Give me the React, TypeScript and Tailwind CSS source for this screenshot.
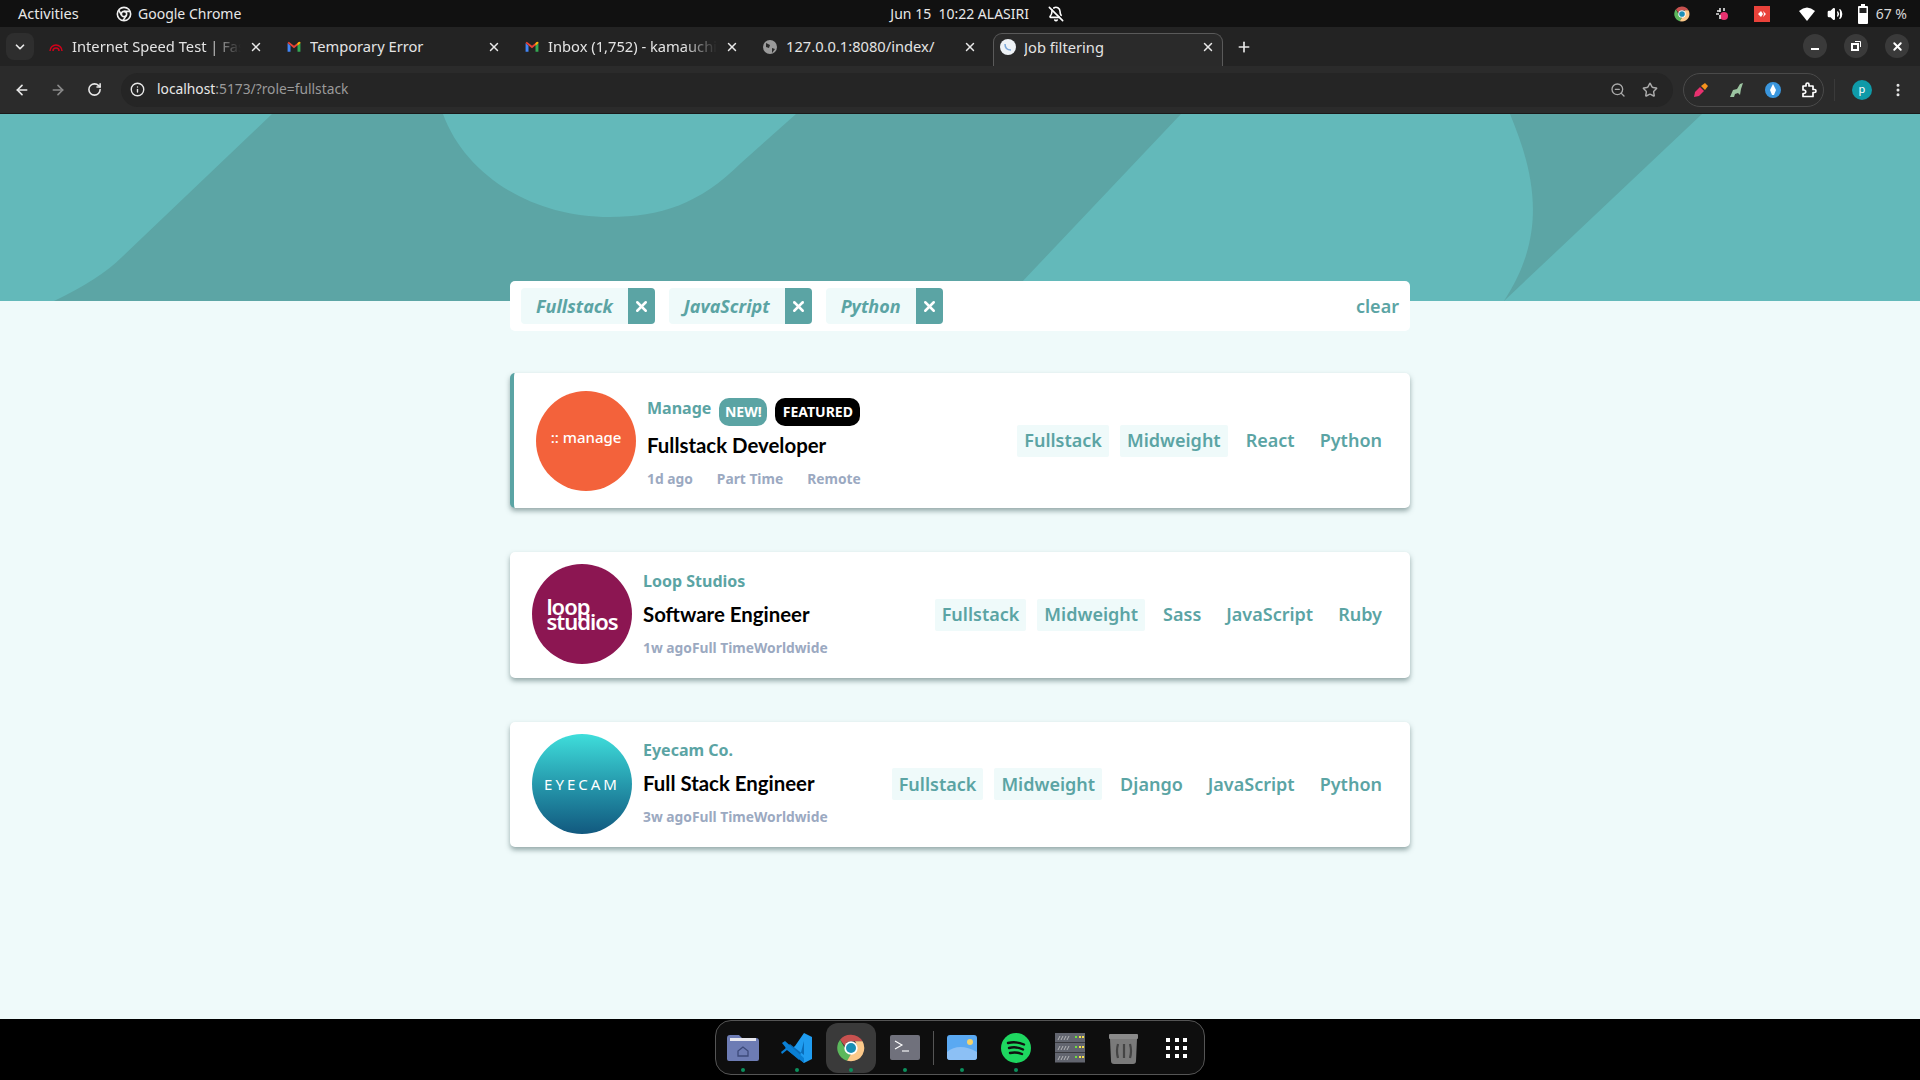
import { ChevronDown, X, Plus, ArrowLeft, ArrowRight, RotateCw, Info, ZoomOut, Star, Volume2, MoreVertical, BellOff } from 'lucide-react';

const teal = 'text-[#5ba4a4]';
const ubuntu = 'font-["Noto_Sans",sans-serif]';

function ChromeLogo({ size = 18 }: { size?: number }) {
  return (
    <svg width={size} height={size} viewBox="0 0 48 48">
      <path d="M24 4a20 20 0 0 1 17.3 10H24a10 10 0 0 0-9.4 6.6L7.6 11.6A20 20 0 0 1 24 4z" fill="#c7514f" />
      <path d="M7.6 11.6l8.6 14.9A10 10 0 0 0 24 34l-6 9.2A20 20 0 0 1 7.6 11.6z" fill="#5cb85c" />
      <path d="M41.3 14A20 20 0 0 1 24 44l-6-.8L26.6 29A10 10 0 0 0 30 14z" fill="#fcc98a" />
      <circle cx="24" cy="24" r="10" fill="#fff" />
      <circle cx="24" cy="24" r="7.5" fill="#1a8fb5" />
    </svg>
  );
}

function GmailIcon() {
  return (
    <svg width="14" height="14" viewBox="0 0 24 24">
      <path d="M1 5v15h5V10z" fill="#4285f4" />
      <path d="M23 5v15h-5V10z" fill="#34a853" />
      <path d="M1 5l11 9 11-9-2-2-9 7-9-7z" fill="#ea4335" />
      <path d="M18 10l5-5v-1l-2-1-3 2z" fill="#fbbc04" />
    </svg>
  );
}

function Tab({ icon, title, active, fade, className }: { icon: React.ReactNode; title: string; active?: boolean; fade?: boolean; className: string }) {
  return (
    <div
      className={`flex h-[33px] items-center pb-[6px] ${className} ${active ? 'rounded-t-[9px] border border-b-0 border-[#5a5a5a] bg-[#2a2a2a]' : ''}`}
    >
      <span className="flex w-[16px] shrink-0 items-center justify-center">{icon}</span>
      <span
        className={`ml-[8px] flex-1 overflow-hidden whitespace-nowrap text-[14.7px] text-[#e4e4e4] ${
          fade ? '[mask-image:linear-gradient(to_right,#000_80%,transparent)]' : ''
        }`}
      >
        {title}
      </span>
      <X size={14} strokeWidth={2.5} className="ml-2 shrink-0 text-[#e8e8e8]" />
    </div>
  );
}

function TopBar() {
  return (
    <div className="flex h-[27px] items-center bg-[#111111] text-[14px] text-[#e8e8e8]">
      <span className="ml-[18px] w-[98px] text-[14.6px]">Activities</span>
      <svg width="16" height="16" viewBox="0 0 24 24" fill="none" stroke="#f0f0f0" strokeWidth="2.4">
        <circle cx="12" cy="12" r="10" />
        <circle cx="12" cy="12" r="4" />
        <path d="M12 8h9M8.5 14L4 6M15.5 14l-5 8" />
      </svg>
      <span className="ml-[6px]">Google Chrome</span>
      <span className="ml-[649px] w-[140px] whitespace-nowrap">Jun 15&nbsp; 10:22 ALASIRI</span>
      <BellOff size={16} strokeWidth={2.4} className="ml-[18px] text-white" />
      <div className="ml-auto flex items-center">
        <ChromeLogo size={18} />
        <svg width="16" height="16" viewBox="0 0 16 16" className="ml-[23px]">
          <circle cx="10" cy="10" r="4" fill="#e8316f" />
          <path d="M6 2v4M3 5h3M2 8h3M6 9v4M10 2v3" stroke="#e8e8e8" strokeWidth="1.6" />
        </svg>
        <svg width="16" height="16" viewBox="0 0 16 16" className="ml-[24px]">
          <rect width="16" height="16" fill="#e9423a" />
          <path d="M4 8l3-3 2 3-2 3zM9 5l3 3-3 3 1-3z" fill="#fff" />
        </svg>
        <svg width="16" height="14" viewBox="0 0 16 14" className="ml-[29px]">
          <path d="M0 4q8-7 16 0L8 14z" fill="#fff" />
        </svg>
        <Volume2 size={16} className="ml-[12px] fill-white text-white" />
        <svg width="10" height="20" viewBox="0 0 10 20" className="ml-[15px]">
          <rect x="3" y="0" width="4" height="2" fill="#fff" />
          <rect x="0" y="2" width="10" height="18" rx="1" fill="#fff" />
          <rect x="1.5" y="4" width="7" height="5" fill="#222" />
        </svg>
        <span className="ml-[8px] mr-[13px] text-[#d8d8d8]">67 %</span>
      </div>
    </div>
  );
}

function TabStrip() {
  return (
    <div className="flex h-[39px] items-end bg-[#232323]">
      <div className="mb-[6px] ml-[6px] mr-[3px] flex h-[27px] w-[28px] items-center justify-center rounded-[8px] bg-[#2e2e2e]">
        <ChevronDown size={14} strokeWidth={3} className="text-[#e8e8e8]" />
      </div>
      <Tab
        className="w-[238px] pl-[11px] pr-[12px]"
        title="Internet Speed Test | Fas"
        fade
        icon={
          <svg width="14" height="14" viewBox="0 0 14 14" fill="none" stroke="#d0021b" strokeWidth="1.5">
            <path d="M1 11a6 6 0 0 1 12 0M4 11a3 3 0 0 1 6 0" />
          </svg>
        }
      />
      <Tab className="w-[238px] pl-[11px] pr-[12px]" title="Temporary Error" icon={<GmailIcon />} />
      <Tab className="w-[238px] pl-[11px] pr-[12px]" title="Inbox (1,752) - kamauchi" fade icon={<GmailIcon />} />
      <Tab
        className="w-[242px] pl-[11px] pr-[16px]"
        title="127.0.0.1:8080/index/"
        icon={
          <svg width="14" height="14" viewBox="0 0 14 14">
            <circle cx="7" cy="7" r="7" fill="#9a9a9a" />
            <path d="M3 3l4 2-1 3-3-1zM9 8l3 1-3 4z" fill="#2a2a2a" />
          </svg>
        }
      />
      <Tab
        active
        className="w-[230px] pl-[6px] pr-[7px]"
        title="Job filtering"
        icon={
          <svg width="16" height="16" viewBox="0 0 16 16">
            <circle cx="8" cy="8" r="8" fill="#eef2f6" />
            <path d="M5 5q0 6 6 6" fill="none" stroke="#7aa7d8" strokeWidth="1.5" />
          </svg>
        }
      />
      <Plus size={16} strokeWidth={2.5} className="mb-[11px] ml-[13px] text-[#e8e8e8]" />
      <div className="mb-[8px] ml-auto mr-[11px] flex gap-[17px]">
        <span className="flex h-[24px] w-[24px] items-center justify-center rounded-full bg-[#3a3a3a]">
          <span className="mt-[6px] h-[2px] w-[8px] bg-white" />
        </span>
        <span className="flex h-[24px] w-[24px] items-center justify-center rounded-full bg-[#3a3a3a]">
          <svg width="12" height="12" viewBox="0 0 12 12" fill="none" stroke="#fff">
            <rect x="2" y="4" width="6" height="6" strokeWidth="2" />
            <path d="M5 1.5h5.5V7" strokeWidth="1" />
          </svg>
        </span>
        <span className="flex h-[24px] w-[24px] items-center justify-center rounded-full bg-[#3a3a3a]">
          <X size={13} strokeWidth={3.5} className="text-white" />
        </span>
      </div>
    </div>
  );
}

function Toolbar() {
  return (
    <div className="flex h-[48px] items-center border-b border-[#1a1a1a] bg-[#2b2b2b]">
      <ArrowLeft size={16} strokeWidth={2.5} className="ml-[14px] text-[#e8e8e8]" />
      <ArrowRight size={16} strokeWidth={2.5} className="ml-[20px] text-[#8a8a8a]" />
      <RotateCw size={15} strokeWidth={2.5} className="ml-[21px] text-[#e8e8e8]" />
      <div className="ml-[19px] flex h-[34px] w-[1552px] items-center rounded-full bg-[#252525]">
        <Info size={15} strokeWidth={2.2} className="ml-[9px] text-[#e8e8e8]" />
        <span className="ml-[12px] text-[13.8px] text-[#e8e8e8]">
          localhost<span className="text-[#9a9a9a]">:5173/?role=fullstack</span>
        </span>
        <ZoomOut size={16} className="ml-auto text-[#aaaaaa]" />
        <Star size={16} strokeWidth={2.2} className="ml-[16px] mr-[15px] text-[#aaaaaa]" />
      </div>
      <div className="ml-[10px] flex h-[34px] w-[141px] items-center gap-[20px] rounded-full border border-[#4a4a4a] pl-[9px]">
        <svg width="16" height="16" viewBox="0 0 16 16">
          <path d="M1 15l1-5 5-5 4 4-5 5z" fill="#e8316f" />
          <path d="M8 4l4-3 3 3-3 4z" fill="#f7931e" />
        </svg>
        <svg width="16" height="16" viewBox="0 0 16 16">
          <path d="M1 15l3-7 4-1 3-5 3-1-2 6-1 6-2-2-3 1-1 3z" fill="#9cc5a1" />
        </svg>
        <svg width="16" height="16" viewBox="0 0 16 16">
          <circle cx="8" cy="8" r="8" fill="#3a96dd" />
          <path d="M8 2l3 6-2 5H7L5 8z" fill="#fff" />
        </svg>
        <svg width="16" height="16" viewBox="0 0 16 16" fill="none" stroke="#fff" strokeWidth="1.7" strokeLinejoin="round">
          <path d="M2 4h3V2.5a1.5 1.5 0 0 1 3 0V4h4v3.5h1.5a1.5 1.5 0 0 1 0 3H12V14.500H2v-3h1a1.700 1.700 0 0 0 0-3.500H2z" />
        </svg>
      </div>
      <span className="ml-[10px] h-[22px] w-px bg-[#3a3a3a]" />
      <span className="ml-[17px] flex h-[20px] w-[20px] items-center justify-center rounded-full bg-[#0f9aa8] text-[11px] text-white">
        p
      </span>
      <MoreVertical size={16} strokeWidth={2.5} className="ml-[18px] text-[#e8e8e8]" />
    </div>
  );
}

function HeaderArt() {
  return (
    <svg className="block h-[187px] w-full" viewBox="0 0 1920 187" preserveAspectRatio="none">
      <rect width="1920" height="187" fill="#63b9ba" />
      <path
        d="M272 0 L122 143 Q100 165 54 187 H1004 L1181 0 H796 L741 49 C700 90 660 103 610 103 C530 103 465 60 443 0 Z"
        fill="#5ca5a5"
      />
      <path d="M1510 0 C1535 60 1548 120 1504 187 L1702 0 Z" fill="#5ca5a5" />
    </svg>
  );
}

function FilterChip({ label }: { label: string }) {
  return (
    <div className="flex h-[36px] items-stretch overflow-hidden rounded-[4px] bg-[#effafa]">
      <span className={`flex items-center px-[15px] text-[18px] font-bold italic ${teal}`}>{label}</span>
      <span className="flex w-[27px] items-center justify-center bg-[#5ba4a4]">
        <X size={17} strokeWidth={3.5} className="text-white" />
      </span>
    </div>
  );
}

function Tag({ label, active }: { label: string; active?: boolean }) {
  return (
    <span className={`flex h-[32px] items-center rounded-[2px] px-[7px] text-[18px] font-semibold ${teal} ${active ? 'bg-[#effafa]' : ''}`}>
      {label}
    </span>
  );
}

type Job = {
  company: string;
  title: string;
  meta: string[];
  tags: string[];
  logo: React.ReactNode;
  featured?: boolean;
};

const jobs: Job[] = [
  {
    company: 'Manage',
    title: 'Fullstack Developer',
    meta: ['1d ago', 'Part Time', 'Remote'],
    tags: ['Fullstack', 'Midweight', 'React', 'Python'],
    featured: true,
    logo: (
      <div className="flex h-[100px] w-[100px] items-center justify-center rounded-full bg-[#f3623b] pb-[6px] text-[15px] font-medium text-white">
        :: manage
      </div>
    ),
  },
  {
    company: 'Loop Studios',
    title: 'Software Engineer',
    meta: ['1w ago', 'Full Time', 'Worldwide'],
    tags: ['Fullstack', 'Midweight', 'Sass', 'JavaScript', 'Ruby'],
    logo: (
      <div className="-mt-[1px] flex h-[100px] w-[100px] items-center justify-center rounded-full bg-[#8c1652] text-[22px] font-semibold leading-[15px] tracking-[-1px] text-white">
        <span>
          loop
          <br />
          studios
        </span>
      </div>
    ),
  },
  {
    company: 'Eyecam Co.',
    title: 'Full Stack Engineer',
    meta: ['3w ago', 'Full Time', 'Worldwide'],
    tags: ['Fullstack', 'Midweight', 'Django', 'JavaScript', 'Python'],
    logo: (
      <div className="-mt-[1px] flex h-[100px] w-[100px] items-center justify-center rounded-full bg-gradient-to-b from-[#3fdedb] to-[#12597f] text-[15px] tracking-[3px] text-white">
        EYECAM
      </div>
    ),
  },
];

function JobCard({ job }: { job: Job }) {
  const featured = job.featured;
  return (
    <div
      className={`flex items-center rounded-[5px] bg-white shadow-[0_3px_5px_rgba(60,90,90,0.5)] ${
        featured ? 'h-[135px] border-l-4 border-[#5ba4a4] pl-[22px] pr-[21px]' : 'h-[125.500px] pl-[22px] pr-[21px]'
      }`}
    >
      {job.logo}
      <div className={`ml-[11px] flex flex-col ${featured ? 'pt-[6px]' : ''}`}>
        <div className={`flex items-center ${featured ? 'h-[28px]' : 'h-[20px]'}`}>
          <span className={`text-[16px] font-bold ${teal} ${featured ? '-mt-[8px]' : '-mt-[2px]'}`}>{job.company}</span>
          {featured && (
            <>
              <span className="-mt-[1px] ml-[8px] flex h-[28px] w-[48px] items-center justify-center rounded-[10px] bg-[#5ba4a4] text-[14px] font-bold text-white">
                NEW!
              </span>
              <span className="-mt-[1px] ml-[8px] flex h-[28px] w-[85px] items-center justify-center rounded-[10px] bg-black text-[14px] font-bold text-white">
                FEATURED
              </span>
            </>
          )}
        </div>
        <div className={`font-["Lato",sans-serif] text-[20.4px] font-bold leading-[24px] text-black ${featured ? 'mt-[7px]' : 'mt-[10px]'}`}>
          {job.title}
        </div>
        <div className={`flex text-[13.800px] font-bold leading-[20px] text-[#9ba9c1] ${featured ? 'mt-[12px] gap-[24px]' : 'mt-[12px]'}`}>
          {job.meta.map((m) => (
            <span key={m}>{m}</span>
          ))}
        </div>
      </div>
      <div className="ml-auto flex gap-[11px]">
        {job.tags.map((t, i) => (
          <Tag key={t} label={t} active={i < 2} />
        ))}
      </div>
    </div>
  );
}

function DockItem({ children, dot, active }: { children: React.ReactNode; dot?: boolean; active?: boolean }) {
  return (
    <div className={`relative mx-[2px] flex h-[50px] w-[50px] items-center justify-center rounded-[12px] ${active ? 'bg-[#3a3a3a]' : ''}`}>
      {children}
      {dot && <span className="absolute bottom-[1px] left-[23px] h-[4px] w-[4px] rounded-full bg-[#0b8f5c]" />}
    </div>
  );
}

function Dock() {
  return (
    <div className="flex h-[61px] items-start justify-center bg-black pt-[1px]">
      <div className="flex h-[55px] w-[490px] items-center rounded-[16px] border border-[#555555] bg-[#0e0e0e]">
        <DockItem dot>
          <svg width="34" height="28" viewBox="0 0 34 28">
            <path d="M1 4q0-3 3-3h9l3 3h14q3 0 3 3v18q0 2-2 2H3q-2 0-2-2z" fill="#6d7cb4" />
            <rect x="4" y="4" width="26" height="3" fill="#e8e8ef" />
            <path d="M17 13l-5 4v5h10v-5z" fill="none" stroke="#3d4a7a" strokeWidth="1.3" />
          </svg>
        </DockItem>
        <DockItem dot>
          <svg width="32" height="32" viewBox="0 0 32 32">
            <path d="M23 1l8 4v22l-8 4-14-13 5-4z" fill="#1f9cf0" />
            <path d="M23 9v14l-14-11-5 4 14 12z" fill="#0a6cb8" />
            <path d="M1 11l3-2 19 17v5l-8-6-9-7-5 4-1-2 5-4z" fill="#0a7fd4" />
          </svg>
        </DockItem>
        <DockItem dot active>
          <ChromeLogo size={32} />
        </DockItem>
        <DockItem dot>
          <svg width="30" height="26" viewBox="0 0 30 26">
            <rect width="30" height="25" rx="2" fill="#70717c" />
            <path d="M5 6l7 4-7 4" fill="none" stroke="#fff" strokeWidth="1.1" />
            <path d="M12 16h7" stroke="#fff" strokeWidth="1.1" />
          </svg>
        </DockItem>
        <span className="mx-[1px] h-[34px] w-px bg-[#555555]" />
        <DockItem dot>
          <svg width="30" height="26" viewBox="0 0 30 26">
            <rect width="30" height="25" rx="3" fill="#5aa9f2" />
            <path d="M0 17q12-10 30 0v5q0 3-3 3H3q-3 0-3-3z" fill="#8cc0f5" />
            <circle cx="23" cy="7" r="3" fill="#f5d36b" />
          </svg>
        </DockItem>
        <DockItem dot>
          <svg width="30" height="30" viewBox="0 0 30 30">
            <circle cx="15" cy="15" r="15" fill="#1ed760" />
            <path d="M7 10q8-2 16 1.500M8 15q7-2 14 1.500M9 20q6-1.500 12 1" fill="none" stroke="#111" strokeWidth="2.4" strokeLinecap="round" />
          </svg>
        </DockItem>
        <DockItem>
          <svg width="30" height="30" viewBox="0 0 30 30">
            <rect y="0" width="30" height="9.5" fill="#62656f" />
            <rect y="10" width="30" height="9.5" fill="#62656f" />
            <rect y="20" width="30" height="9.5" fill="#62656f" />
            <path d="M20 4h2M20 14h2M20 24h2" stroke="#6fe23f" strokeWidth="2" />
            <path d="M24 4h5M24 14h5M24 24h5" stroke="#f4e04d" strokeWidth="2" strokeDasharray="2 1" />
            <path d="M3 7l2-4M6 7l2-4M9 7l2-4M12 7l2-4M3 17l2-4M6 17l2-4M9 17l2-4M12 17l2-4M3 27l2-4M6 27l2-4M9 27l2-4M12 27l2-4" stroke="#c8c8c8" strokeWidth="0.8" />
          </svg>
        </DockItem>
        <DockItem>
          <svg width="30" height="32" viewBox="0 0 30 32">
            <rect y="2" width="29" height="5" rx="1" fill="#8a8a8a" />
            <path d="M1 7h27l-1 22q0 3-3 3H5q-3 0-3-3z" fill="#7a7a7a" />
            <path d="M9 12q-2 7 0 14M15 12v14M21 12q2 7 0 14" stroke="#444" strokeWidth="2.2" fill="none" />
          </svg>
        </DockItem>
        <div className="ml-[15px] grid w-[22px] grid-cols-3 gap-[4px]">
          {Array.from({ length: 9 }).map((_, i) => (
            <span key={i} className="h-[4px] w-[4px] bg-white" />
          ))}
        </div>
      </div>
    </div>
  );
}

export default function App() {
  return (
    <div className={`flex h-[1080px] w-[1920px] flex-col overflow-hidden bg-[#effafa] ${ubuntu}`}>
      <TopBar />
      <TabStrip />
      <Toolbar />
      <HeaderArt />
      <main className="flex-1">
        <div className="mx-auto -mt-[20px] flex w-[900px] flex-col">
          <div className="relative flex h-[50px] items-center gap-[14px] rounded-[5px] bg-white pl-[11px] pr-[11px]">
            <FilterChip label="Fullstack" />
            <FilterChip label="JavaScript" />
            <FilterChip label="Python" />
            <span className={`ml-auto text-[18px] font-semibold ${teal}`}>clear</span>
          </div>
          <div className="mt-[42px] flex flex-col gap-[44px]">
            {jobs.map((job) => (
              <JobCard key={job.company} job={job} />
            ))}
          </div>
        </div>
      </main>
      <Dock />
    </div>
  );
}
